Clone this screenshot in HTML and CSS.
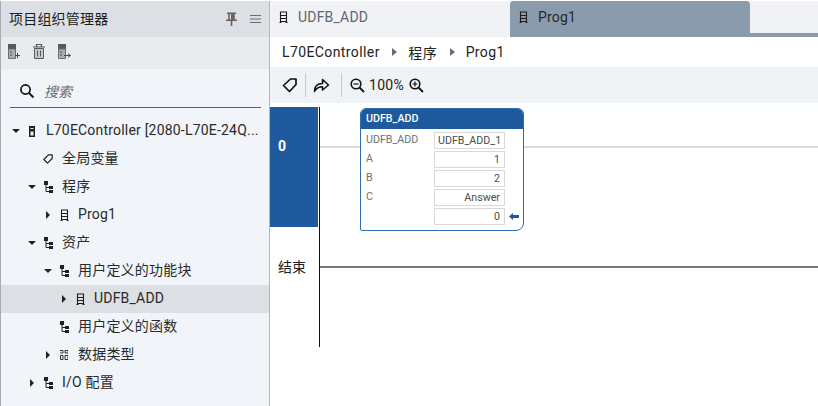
FILE: index.html
```html
<!DOCTYPE html>
<html lang="zh">
<head>
<meta charset="utf-8">
<title>Project Organizer</title>
<link rel="stylesheet" href="styles.css">
</head>
<body>
<div class="app">
  <aside class="side">
    <div class="side-head">
      <span class="side-title">项目组织管理器</span>
      <svg class="pin" width="11" height="14" viewBox="0 0 11 14"><path d="M1 .5h9v1.500H8.800v5.500H11V9H6.300v5H4.700V9H0V7.500h2.200V2H1zM3.800 2v5.500h1.200V2z" fill="#6e5f5c"/></svg>
      <svg class="menu" width="11" height="8" viewBox="0 0 11 8"><path d="M0 .5h11M0 4h11M0 7.500h11" stroke="#6b6f73" fill="none"/></svg>
    </div>
    <div class="side-tools">
      <svg width="12" height="15" viewBox="0 0 12 15"><path d="M0 0h8v5H0z" fill="#55595d"/><path d="M.500 5h7v9.500h-7z" fill="#a9adb1" stroke="#6a6e72"/><path d="M2 8h2M2 11h2M7 11.500h5M9.500 9v5" stroke="#44484c" fill="none"/></svg>
      <svg width="12" height="15" viewBox="0 0 12 15"><path d="M3.500 2.500v-2h5v2M0 3h12" stroke="#55595d" stroke-width="1.200" fill="none"/><path d="M1.500 4.500h9v10h-9z" fill="#c7cacc" stroke="#55595d"/><path d="M4.500 6.500v6M7.500 6.500v6" stroke="#55595d" fill="none"/></svg>
      <svg width="13" height="15" viewBox="0 0 13 15"><path d="M0 0h8v5H0z" fill="#55595d"/><path d="M.500 5h7v9.500h-7z" fill="#a9adb1" stroke="#6a6e72"/><path d="M2 8h2M2 11h2M6 11.500h6M10 9.500l2.500 2-2.500 2" stroke="#44484c" fill="none"/></svg>
    </div>
    <div class="search">
      <svg width="16" height="16" viewBox="0 0 16 16"><circle cx="6.500" cy="6.500" r="4.600" stroke="#111" stroke-width="1.700" fill="none"/><path d="M10 10l4.500 4.500" stroke="#111" stroke-width="1.800"/></svg>
      <span class="search-text">搜索</span>
    </div>
    <ul class="tree">
      <li class="row l0"><i class="arrow down"></i><svg class="ic" width="6" height="11" viewBox="0 0 6 11"><path d="M0 0h6v11H0z" fill="#222"/><path d="M1.500 2h3v1h-3zM1.500 5.500h3v4h-3z" fill="#eef1f4"/></svg><span class="lbl">L70EController [2080-L70E-24Q...</span></li>
      <li class="row l1 noarrow"><svg class="ic" width="10" height="10" viewBox="0 0 10 10"><path d="M.800 5.500L5.500 .800H9.200V4.500L4.500 9.200z" stroke="#222" stroke-width="1.200" fill="none" stroke-linejoin="round"/></svg><span class="lbl cjk">全局变量</span></li>
      <li class="row l1"><i class="arrow down"></i><svg class="ic" width="9" height="12" viewBox="0 0 9 12"><use href="#tree"/></svg><span class="lbl cjk">程序</span></li>
      <li class="row l2"><i class="arrow right"></i><svg class="ic" width="9" height="12" viewBox="0 0 9 12"><use href="#doc"/></svg><span class="lbl">Prog1</span></li>
      <li class="row l1"><i class="arrow down"></i><svg class="ic" width="9" height="12" viewBox="0 0 9 12"><use href="#tree"/></svg><span class="lbl cjk">资产</span></li>
      <li class="row l2"><i class="arrow down"></i><svg class="ic" width="9" height="12" viewBox="0 0 9 12"><use href="#tree"/></svg><span class="lbl cjk">用户定义的功能块</span></li>
      <li class="row l3 sel"><i class="arrow right"></i><svg class="ic" width="9" height="12" viewBox="0 0 9 12"><use href="#doc"/></svg><span class="lbl">UDFB_ADD</span></li>
      <li class="row l2 noarrow2"><svg class="ic" width="9" height="12" viewBox="0 0 9 12"><use href="#tree"/></svg><span class="lbl cjk">用户定义的函数</span></li>
      <li class="row l2"><i class="arrow right"></i><svg class="ic" width="8" height="10" viewBox="0 0 8 10"><path d="M0 .5h3M0 3h3v-2.500M5 .5h3v2.500H5zM.500 5.500h2.500v4H.500zM5 5.500h3v4H5z" fill="none" stroke="#333"/></svg><span class="lbl cjk types">数据类型</span></li>
      <li class="row l1"><i class="arrow right"></i><svg class="ic" width="9" height="12" viewBox="0 0 9 12"><use href="#tree"/></svg><span class="lbl cjk">I/O 配置</span></li>
    </ul>
  </aside>
  <main class="main">
    <div class="tabs">
      <div class="tab"><svg width="9" height="12" viewBox="0 0 9 12"><use href="#doc"/></svg><span>UDFB_ADD</span></div>
      <div class="tab active"><svg width="9" height="12" viewBox="0 0 9 12"><use href="#doc"/></svg><span>Prog1</span></div>
    </div>
    <nav class="crumbs"><span>L70EController</span><i class="sep"></i><span>程序</span><i class="sep"></i><span>Prog1</span></nav>
    <div class="tools">
      <svg width="16" height="16" viewBox="0 0 16 16"><path d="M1.500 8.500L8.500 2H14V7.500L7.500 14.500z" stroke="#111" stroke-width="1.700" fill="none" stroke-linejoin="round"/></svg>
      <b class="div"></b>
      <svg width="17" height="16" viewBox="0 0 17 16"><path d="M1.500 14.500C1.500 9.500 4.500 6.500 9.500 6.500V2.500L15.500 8L9.500 13V9.800C6 9.800 3.500 11 1.500 14.500z" stroke="#111" stroke-width="1.500" fill="none" stroke-linejoin="round"/></svg>
      <b class="div wide"></b>
      <svg width="15" height="15" viewBox="0 0 15 15"><circle cx="6" cy="6" r="4.800" stroke="#111" stroke-width="1.600" fill="none"/><path d="M9.500 9.500l4.500 4.500" stroke="#111" stroke-width="1.800"/><path d="M3.500 6h5" stroke="#111" stroke-width="1.200"/></svg>
      <span class="pct">100%</span>
      <svg width="15" height="15" viewBox="0 0 15 15"><circle cx="6" cy="6" r="4.800" stroke="#111" stroke-width="1.600" fill="none"/><path d="M9.500 9.500l4.500 4.500" stroke="#111" stroke-width="1.800"/><path d="M3.500 6h5M6 3.500v5" stroke="#111" stroke-width="1.200"/></svg>
    </div>
    <div class="canvas">
      <section class="rung">
        <div class="rung-no sel-no">0</div>
        <div class="rail light"></div>
      </section>
      <section class="rung">
        <div class="rung-no">结束</div>
        <div class="rail dark"></div>
      </section>
      <div class="fb">
        <div class="fb-title">UDFB_ADD</div>
        <div class="fb-body">
          <span class="fb-name">UDFB_ADD</span><span class="fb-val left">UDFB_ADD_1</span><span></span>
          <span class="fb-name">A</span><span class="fb-val">1</span><span></span>
          <span class="fb-name">B</span><span class="fb-val">2</span><span></span>
          <span class="fb-name">C</span><span class="fb-val">Answer</span><span></span>
          <span></span><span class="fb-val">0</span>
          <svg width="10" height="7" viewBox="0 0 10 7"><path d="M0 3.500L4 0V2h6v3H4v2z" fill="#1f5a9e"/></svg>
        </div>
      </div>
    </div>
  </main>
</div>
<svg class="defs" width="0" height="0">
  <defs>
    <g id="tree"><path d="M0 0h4v4H0zM5 5h4v3H5zM5 9h4v3H5z" fill="#222"/><path d="M2 4v6.500h3M2 6.500h3" stroke="#222" fill="none"/></g>
    <g id="doc"><path d="M1.500 .5v10.500M7.500 .5v10.500M1 1h7M1 4.500h7M1 7.500h7M1 10.500h7" stroke="#1c1c1c" stroke-width="1.100" fill="none"/><path d="M.5 11.500h2M6.500 11.500h2" stroke="#1c1c1c"/></g>
  </defs>
</svg>
</body>
</html>
```
FILE: styles.css
```css
* { box-sizing: border-box; }
html, body { margin: 0; height: 100%; overflow: hidden; background: #fff; }
body { font-family: Roboto, "Noto Sans CJK SC", sans-serif; font-size: 14px; color: #222; }
.defs { position: absolute; }
.app { display: flex; width: 818px; height: 406px; padding-top: 1px; }

.side { width: 270px; flex: none; background: #f1f4f8; border-left: 1px solid #a8acb0; border-right: 1px solid #b4b8bc; display: flex; flex-direction: column; }
.side-head { height: 36px; background: #dcdfe3; display: flex; align-items: center; padding: 0 8px 0 8px; }
.side-title { flex: 1; font-size: 14px; letter-spacing: .2px; color: #1c1c1c; padding-bottom: 2px; }
.pin { margin-right: 13px; }
.side-tools { height: 32px; background: #e8ecef; display: flex; align-items: center; gap: 13px; padding: 0 0 3px 7px; }
.search { height: 39px; margin: 0 8px 0 9px; border-bottom: 1px solid #5c6064; display: flex; align-items: center; gap: 9px; padding: 6px 0 0 9px; }
.search-text { font-style: italic; color: #6a6d70; font-size: 14px; }
.tree { list-style: none; margin: 9px 0 0; padding: 0; }
.row { height: 28px; display: flex; align-items: center; white-space: nowrap; font-size: 14px; letter-spacing: .2px; color: #2a2a2a; }
.row.sel { background: #dcdfe3; }
.lbl { padding-bottom: 2px; }
.lbl.cjk { padding-bottom: 4px; }
.l0 { padding-left: 11px; }
.l1 { padding-left: 27px; }
.l2 { padding-left: 43px; }
.l3 { padding-left: 59px; }
.l1.noarrow { padding-left: 42px; }
.l2.noarrow2 { padding-left: 59px; }
.arrow { width: 0; height: 0; flex: none; display: block; border-style: solid; border-color: transparent; }
.arrow.down { border-width: 4px 4px 0; border-top-color: #222; margin-right: 8px; }
.arrow.right { border-width: 4px 0 4px 4px; border-left-color: #222; margin-right: 10px; margin-left: 2px; }
.ic { flex: none; margin-right: 9px; }
.l0 .ic { margin: 0 11px 0 1px; }
.types { margin-left: 1px; }

.main { flex: 1; min-width: 0; display: flex; flex-direction: column; }
.tabs { height: 36px; display: flex; background: #f0f2f5; border-bottom: 4px solid #8a9cab; }
.tab { width: 240px; height: 36px; flex: none; display: flex; align-items: center; gap: 10px; padding: 0 0 4px 9px; color: #5d6770; background: #f0f2f5; font-size: 14px; letter-spacing: .2px; }
.tab.active { background: #8a9cab; color: #1f2a33; border-radius: 4px 4px 0 0; }
.crumbs { height: 30px; display: flex; align-items: center; background: #fff; font-size: 14px; letter-spacing: .4px; padding: 0 0 0 12px; color: #222; }
.sep { width: 0; height: 0; border-style: solid; border-color: transparent; border-width: 4px 0 4px 5px; border-left-color: #5f6f80; margin: 0 11px 0 12.5px; }
.tools { height: 36px; background: #f0f3f6; display: flex; align-items: center; padding: 0 0 0 12px; }
.div { width: 1px; height: 24px; background: #c6cacd; margin: 0 7px; }
.div.wide { margin: 0 8px 0 11px; }
.pct { margin: 0 5px 0 4px; font-size: 14px; color: #222; letter-spacing: .3px; }

.canvas { position: relative; flex: 1; padding-top: 4px; background: #fff; }
.rung { display: flex; height: 120px; }
.rung-no { width: 48px; flex: none; display: flex; align-items: center; padding: 0 0 42px 8px; font-size: 14px; color: #222; margin-right: 1px; }
.sel-no { background: #205a9e; color: #fff; font-weight: 700; }
.rail { flex: 1; border-left: 1px solid #111; padding-top: 39px; }
.rail::after { content: ""; display: block; }
.rail.light::after { border-top: 2px solid #dadada; }
.rail.dark::after { border-top: 2px solid #777; }

.fb { position: absolute; left: 90px; top: 5px; width: 164px; height: 123px; background: #fff; border: 1px solid #2f6cb0; border-radius: 6px 6px 8px 2px; overflow: hidden; }
.fb-title { height: 20px; background: #205a9e; color: #fff; font-size: 10.7px; font-weight: 500; line-height: 19px; padding-left: 5px; }
.fb-body { display: grid; grid-template-columns: 68px 71px 1fr; grid-auto-rows: 17px; row-gap: 2px; padding: 3px 0 0 5px; align-items: center; font-size: 10.7px; color: #707070; }
.fb-name { line-height: 16px; padding-bottom: 2px; }
.fb-val { height: 17px; border: 1px solid #d8d8d8; text-align: right; padding: 0 4px 0 3px; line-height: 15px; color: #4c4c4c; }
.fb-val.left { text-align: left; }
.fb-body svg { margin-left: 4px; }
```
